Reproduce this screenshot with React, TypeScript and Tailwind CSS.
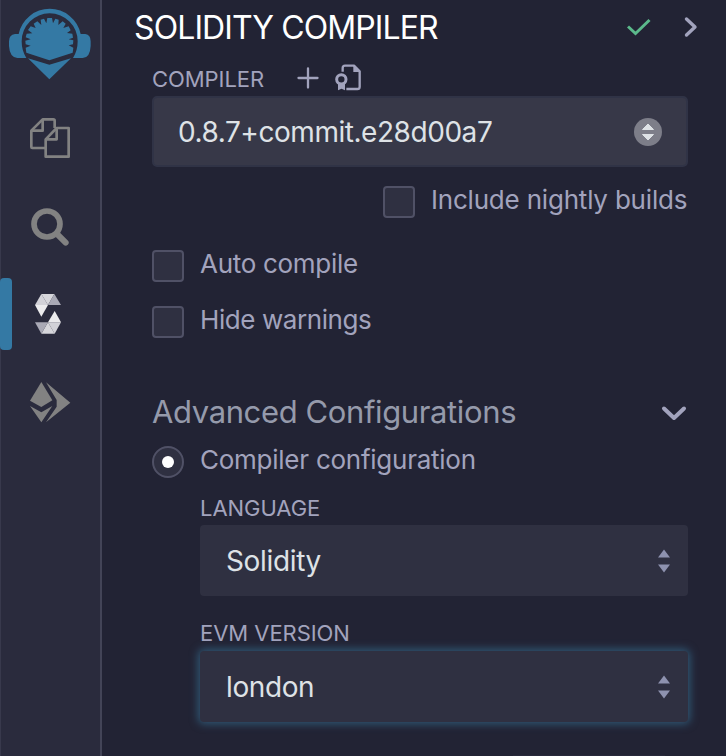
import type { ReactNode } from "react";

function RemixLogo() {
  return (
    <svg className="h-[90px] w-[98px]" viewBox="3 0 294 270" fill="#3479a4">
      <path d="M56 102 A95 95 0 0 1 242 102 L256 102 Q272 104 272 124 L272 138 Q270 174 248 174 L219 174 Q233 152 233 124 A84 84 0 0 0 65 124 Q65 152 79 174 L52 174 Q29 172 27 138 L27 124 Q27 104 45 102 Z" />
      <path d="M139 70 L142 54 L156 54 L159 70 L166 56 L176 59 L175 75 L188 64 L197 71 L190 84 L206 79 L212 91 L201 99 L217 101 L219 113 L206 118 L220 121 L219 133 L206 136 L220 143 L218 158 L148 181 L79 158 L77 143 L92 137 L77 133 L76 122 L92 118 L77 112 L80 101 L97 100 L84 90 L92 79 L107 84 L101 71 L112 64 L124 75 L122 59 L132 56 Z" />
      <path d="M84 175 L148 194 L213 175 L148 238 Z" />
    </svg>
  );
}

function FilesIcon() {
  return (
    <svg className="h-[42px] w-[42px]" viewBox="87 51 126 126" fill="none" stroke="#828282" strokeWidth="8" strokeLinejoin="round">
      <path d="M135 144 H97 Q94 144 94 141 V92 L128 58 H160 Q164 58 164 62 V84" />
      <path d="M128 58 V92 H94" />
      <path d="M170 84 H206 V170 H137 V118 Z" />
      <path d="M170 84 V118 H137" />
    </svg>
  );
}

function SearchIcon() {
  return (
    <svg className="h-[40px] w-[40px]" viewBox="90 322 120 120" fill="none" stroke="#828282">
      <circle cx="141" cy="373" r="39" strokeWidth="17" />
      <path d="M170 402 L197 429" strokeWidth="18" strokeLinecap="round" />
    </svg>
  );
}

function SolidityIcon() {
  return (
    <svg className="h-[42px] w-[28px]" viewBox="102 69 84 126">
      <path d="M124 72 L105 105 H144 Z" fill="#d2d2d8" />
      <path d="M124 72 H163 L144 105 Z" fill="#d6d6db" />
      <path d="M163 72 L183 105 H144 Z" fill="#a9a9b5" />
      <path d="M105 105 H144 L124 140 Z" fill="#ebebed" />
      <path d="M164 191 L183 157 H144 Z" fill="#d2d2d8" />
      <path d="M164 191 H124 L144 157 Z" fill="#d6d6db" />
      <path d="M124 191 L105 157 H144 Z" fill="#a9a9b5" />
      <path d="M183 157 H144 L164 123 Z" fill="#ebebed" />
    </svg>
  );
}

function DeployIcon() {
  return (
    <svg className="h-[42px] w-[42px]" viewBox="87 333 126 126" fill="#828282">
      <path d="M124 336 L157 391 L124 411 L90 392 Z" />
      <path d="M90 408 L124 427 L157 408 L124 457 Z" />
      <path d="M138 337 L211 398 L138 457 L170 410 V390 Z" />
    </svg>
  );
}

function Arrows() {
  return (
    <svg className="h-[24px] w-[14px] shrink-0" viewBox="0 0 14 24" fill="#8e92af">
      <path d="M7 .5 L13 8.5 H1 Z M7 23.5 L13 15.5 H1 Z" />
    </svg>
  );
}

function Check({ children }: { children: ReactNode }) {
  return (
    <div className="flex h-8 items-center gap-4">
      <div className="h-8 w-8 shrink-0 rounded-[4px] border-2 border-[#505166] bg-[#2f3041]" />
      {children}
    </div>
  );
}

export default function App() {
  return (
    <div className="flex h-[756px] w-[726px] overflow-hidden bg-[#222334] font-['Inter',sans-serif] font-[430] text-[#a2a3bd]">
      <aside className="flex w-[102px] shrink-0 flex-col border-l border-r-2 border-l-[#38394c] border-r-[#434457] bg-[#2a2b3d]">
        <RemixLogo />
        <div className="flex h-[96px] items-center pl-[28px]">
          <FilesIcon />
        </div>
        <div className="flex h-[82px] items-center pl-[29px]">
          <SearchIcon />
        </div>
        <div className="mt-[10px] flex h-[72px] items-center">
          <div className="-ml-px h-[72px] w-[12px] rounded-[4px] bg-[#3479a4]" />
          <div className="ml-[22px]">
            <SolidityIcon />
          </div>
        </div>
        <div className="mt-[31px] pl-[28px]">
          <DeployIcon />
        </div>
      </aside>

      <main className="flex min-w-0 flex-1 flex-col pr-[38px]">
        <header className="flex h-[54px] items-center pl-8">
          <h1 className="flex-1 whitespace-nowrap pt-0.5 text-[32px] leading-[52px] tracking-[-0.9px] text-white">SOLIDITY COMPILER</h1>
          <svg className="h-[18px] w-[24px]" viewBox="0 0 24 18" fill="none" stroke="#5bb98b" strokeWidth="3">
            <path d="M1 8.5 L8.5 15.5 L22.5 2" />
          </svg>
          <svg className="-mr-[10px] ml-[33px] h-[22px] w-[14px]" viewBox="0 0 14 22" fill="none" stroke="#a2a3bd" strokeWidth="3.4" strokeLinecap="round" strokeLinejoin="round">
            <path d="M2.5 3 L11 11 L2.5 19" />
          </svg>
        </header>

        <section className="flex flex-col pl-[50px]">
          <div className="flex h-[42px] items-center pt-[6px]">
            <span className="w-[145px] pt-0.5 text-[22px] leading-[28px] tracking-[-0.05px]">COMPILER</span>
            <svg className="h-[22px] w-[22px]" viewBox="0 0 22 22" stroke="#a2a3bd" strokeWidth="2.3" strokeLinecap="round">
              <path d="M11 1.5 V20.5 M1.5 11 H20.5" />
            </svg>
            <svg className="ml-[15px] h-[28px] w-[28px]" viewBox="642 192 84 84" fill="none" stroke="#a2a3bd" strokeWidth="7" strokeLinejoin="round">
              <path d="M668 215 V204 Q668 197 675 197 H702 L719 214 V260 Q719 267 712 267 H679" />
              <path d="M700 195 V216 H721 Z" fill="#a2a3bd" stroke="none" />
              <circle cx="664" cy="238" r="14" strokeWidth="9" />
              <path d="M654 251 H675 V271 L664.500 266 L654 271 Z" fill="#a2a3bd" stroke="none" />
            </svg>
          </div>

          <div className="flex h-[71px] items-center justify-between rounded-[5px] border-2 border-[#303346] bg-[#373848] pl-6 pr-6">
            <span className="text-[28px] tracking-[-0.45px] text-[#dee2e6]">0.8.7+commit.e28d00a7</span>
            <div className="flex h-7 w-7 items-center justify-center rounded-full bg-[#7d7e89]">
              <svg className="h-[18px] w-[14px]" viewBox="0 0 14 18" fill="#dee2e6" stroke="#dee2e6" strokeLinejoin="round">
                <path d="M7 1 L12.500 6.500 H1.500 Z M7 17 L12.500 11.500 H1.500 Z" />
              </svg>
            </div>
          </div>

          <div className="mt-[19px] flex justify-end">
            <Check>
              <span className="w-[257px] whitespace-nowrap pb-1.5 text-[26px] tracking-[-0.2px]">Include nightly builds</span>
            </Check>
          </div>
          <div className="mt-8">
            <Check>
              <span className="pb-1.5 text-[26px] tracking-[-0.3px]">Auto compile</span>
            </Check>
          </div>
          <div className="mt-6">
            <Check>
              <span className="pb-1.5 text-[26px] tracking-[-0.42px]">Hide warnings</span>
            </Check>
          </div>

          <div className="mt-[50px] flex h-[48px] items-center justify-between">
            <h2 className="whitespace-nowrap text-[31px] tracking-[-0.38px] text-[#959aab]">Advanced Configurations</h2>
            <svg className="h-[18px] w-[28px]" viewBox="0 0 28 18" fill="none" stroke="#a2a3bd" strokeWidth="4" strokeLinecap="round" strokeLinejoin="round">
              <path d="M4 5.500 L14 15 L24 5.500" />
            </svg>
          </div>

          <div className="mt-[10px] flex h-8 items-center gap-4">
            <div className="flex h-8 w-8 items-center justify-center rounded-full border-2 border-[#505166] bg-[#2f3041]">
              <div className="h-3 w-3 rounded-full bg-white" />
            </div>
            <span className="whitespace-nowrap pb-1.5 text-[26px] tracking-[-0.25px]">Compiler configuration</span>
          </div>

          <div className="flex flex-col pl-12">
            <label className="mt-[16px] h-[31px] text-[22px] leading-[28px] tracking-[-0.05px]">LANGUAGE</label>
            <div className="flex h-[71px] items-center justify-between rounded-[4px] bg-[#2f3041] pl-[26px] pr-[17px]">
              <span className="text-[28px] tracking-[-0.35px] text-[#dee2e6]">Solidity</span>
              <Arrows />
            </div>
            <label className="mt-[23px] h-[32px] text-[22px] leading-[28px] tracking-[-0.05px]">EVM VERSION</label>
            <div className="flex h-[71px] items-center justify-between rounded-[4px] bg-[#2f3041] pl-[26px] pr-[17px] shadow-[0_0_8px_2px_#305875]">
              <span className="text-[28px] tracking-[-0.4px] text-[#dee2e6]">london</span>
              <Arrows />
            </div>
            <div className="mr-[23px] mt-[33px] h-px w-[152px] self-end bg-[#28293b]" />
          </div>
        </section>
      </main>
    </div>
  );
}
